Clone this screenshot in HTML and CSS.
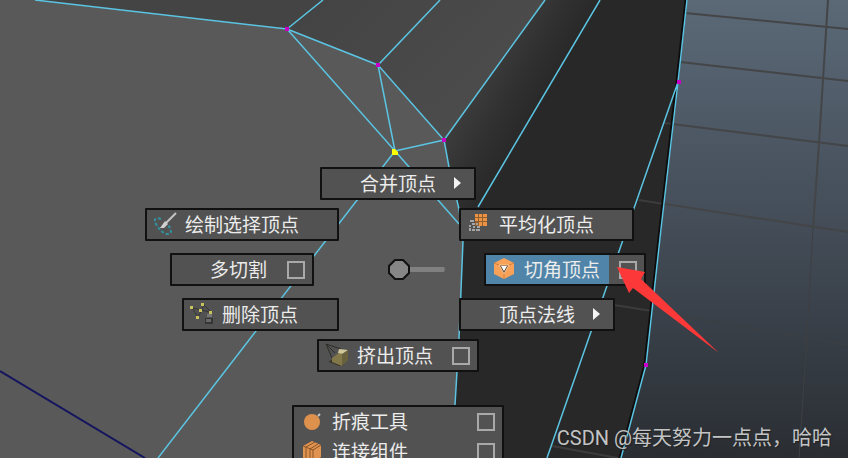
FILE: index.html
```html
<!DOCTYPE html>
<html lang="zh-CN">
<head>
<meta charset="utf-8">
<title>顶点标记菜单</title>
<link rel="stylesheet" href="styles.css">
</head>
<body>
<main class="viewport">
  <svg class="scene" aria-hidden="true">
    <defs>
      <linearGradient id="bevel" gradientUnits="userSpaceOnUse" x1="495" y1="60" x2="550" y2="92">
        <stop offset="0" stop-color="#3b3b3b"/>
        <stop offset=".5" stop-color="#303030"/>
        <stop offset="1" stop-color="#282828"/>
      </linearGradient>
      <linearGradient id="top" gradientUnits="userSpaceOnUse" x1="320" y1="0" x2="430" y2="120">
        <stop offset="0" stop-color="#444"/>
        <stop offset="1" stop-color="#4b4b4b"/>
      </linearGradient>
    </defs>
    <g class="grid">
      <path d="M685 13 848 29M680 62 848 81M664 123 848 146M639 200 848 232"/>
      <path d="M828 0 819 143 813 229"/>
      <path class="grid-far" d="M813 229 807 336 799 458M652 311 848 345"/>
    </g>
    <path fill="#282828" d="M440 0H687L678 82 661 229 646 365 630 425 621 458H440Z"/>
    <path fill="#595959" d="M0 0H440L444 140 449 167 459 209 463 241 461 290 459 338 455 405V458H0Z"/>
    <path fill="url(#top)" d="M35 0 287 29 378 65 444 140 545 0Z"/>
    <path fill="url(#bevel)" d="M545 0H640L478 280 463 241 459 209 449 167 444 140Z"/>
    <path class="grid-mesh" d="M639 200 664 204M664 123 674 124M614 305 652 311M552 446 618 458"/>
    <path class="rim" d="M686 0 677 82 660 229 645 365 629 425 620 458"/>
    <g class="edges">
      <path d="M35 0 287 29 323 0M287 29 378 65 440 0M287 29 395 151 378 65 444 140 395 151"/>
      <path d="M158 458 395 151 459 224M545 0 444 140 449 167 459 209 463 241 461 290 459 338 455 405"/>
      <path d="M600 0 478 207M678 82 547 458M687 0 678 82 661 229 646 365 630 425 621 458"/>
    </g>
    <path class="axis" d="M0 371 145 458"/>
    <g fill="#c800c8">
      <path d="M285 27h4v4h-4zM376 63h4v4h-4zM442 138h4v4h-4zM677 80h4v4h-4zM644 363h4v4h-4z"/>
    </g>
    <path fill="#ff0" d="M392 149h3l3 3v3h-6z"/>
    <path fill="#808080" d="M408 267h36l1 2-1 3h-36z"/>
    <path fill="#868686" stroke="#111" stroke-width="2" d="M395 260h8l6 6v7l-6 6h-8l-6-6v-7z"/>
  </svg>

  <nav class="marking-menu" aria-label="顶点">
    <div class="item merge">
      <button class="command" type="button"><span class="icon"></span>合并顶点<span class="arrow"></span></button>
    </div>
    <div class="item paint">
      <button class="command" type="button">
        <svg class="icon" viewBox="0 0 24 24" aria-hidden="true">
          <path fill="none" stroke="#3293a0" stroke-width="2" stroke-dasharray="3 2" d="M8 7C3 5 0 7 3 12c3 5 6 9 11 10 5 0 5-4 1-9"/>
          <path stroke="#c4c4c4" stroke-width="2" d="m13 11 10-10"/>
          <path fill="#d0d0d0" d="m12 9 3 3-4 4H7z"/>
        </svg>绘制选择顶点</button>
    </div>
    <div class="item multicut">
      <button class="command" type="button"><span class="icon"></span>多切割</button>
      <button class="option" type="button" aria-label="多切割选项"><span class="box"></span></button>
    </div>
    <div class="item delete">
      <button class="command" type="button">
        <svg class="icon" viewBox="0 0 24 24" aria-hidden="true">
          <path fill="none" stroke="#343434" d="m2 6 6 9 4-7 7 2M2 6l10 2 2-6M13 2l7 7"/>
          <path fill="#c8c35c" d="M0 4h3v3H0zM11 1h3v3h-3zM9 7h3v3H9zM6 14h3v3H6zM19 9h3v3h-3z"/>
          <path fill="#777" d="M17 12h5v3h-5z"/>
          <path fill="#363636" d="M15 16h8v6h-8z"/>
          <path fill="#686868" d="M16 17h5v3h-5z"/>
        </svg>删除顶点</button>
    </div>
    <div class="item average">
      <button class="command" type="button">
        <svg class="icon" viewBox="0 0 24 24" aria-hidden="true">
          <path fill="#92602f" d="M8 2h12v12H8z"/>
          <path fill="#eb9244" d="M8 2h3v3H8zM12 2h3v3h-3zM16 2h4v3h-4zM8 6h3v3H8zM12 6h3v3h-3zM16 6h4v3h-4zM12 10h3v4h-3zM16 10h4v4h-4z"/>
          <path fill="#a5a5a5" d="M3 8h4v2H3zM5 11h3v2H5zM2 13h2v2H2zM9 11h2v2H9zM6 14h2v2H6zM10 14h3v2h-3zM2 16h2v3H2zM5 17h3v2H5zM9 17h4v2H9z"/>
        </svg>平均化顶点</button>
    </div>
    <div class="item chamfer">
      <button class="command selected" type="button">
        <svg class="icon" viewBox="0 0 24 24" aria-hidden="true">
          <path fill="#f8a259" d="m12 1 10 5v11l-10 5-10-5V6z"/>
          <path fill="none" stroke="#d47d35" d="M2 6l5 2M22 6l-5 2M12 17v5"/>
          <path fill="#5c5148" stroke="#ffc38c" d="M7 8h10l-5 9z"/>
          <path fill="#fff" d="M9 9h6l-3 5z"/>
        </svg>切角顶点</button>
      <button class="option" type="button" aria-label="切角顶点选项"><span class="box"></span></button>
    </div>
    <div class="item normals">
      <button class="command" type="button"><span class="icon"></span>顶点法线<span class="arrow"></span></button>
    </div>
    <div class="item extrude">
      <button class="command" type="button">
        <svg class="icon" viewBox="0 0 24 24" aria-hidden="true">
          <path fill="none" stroke="#2d2e28" d="m1 1 6 14M1 1l15 5M1 1l9 9M4 19l7-4"/>
          <path fill="#3c3828" d="m4 19 6-5 9 8-5 1z"/>
          <path fill="#817748" d="m7 15 8-6 2 2v12l-10-4z"/>
          <path fill="#cfc79b" d="m14 6 9 1-5 4-5-1z"/>
          <path fill="#69613b" d="m17 11 6-4v10l-6 6z"/>
        </svg>挤出顶点</button>
      <button class="option" type="button" aria-label="挤出顶点选项"><span class="box"></span></button>
    </div>
    <div class="list">
      <div class="row">
        <button class="command" type="button">
          <svg class="icon" viewBox="0 0 24 24" aria-hidden="true">
            <circle cx="12" cy="13" r="8" fill="#de914d"/>
            <path stroke="#c7c7c7" stroke-width="2" d="m18 7 2-2"/>
          </svg>折痕工具</button>
        <button class="option" type="button" aria-label="折痕工具选项"><span class="box"></span></button>
      </div>
      <div class="row">
        <button class="command" type="button">
          <svg class="icon" viewBox="0 0 24 24" aria-hidden="true">
            <path fill="#e09350" d="m3 7 9-5 9 4v12l-8 5-10-4z"/>
            <path fill="none" stroke="#8a5526" d="m3 7 10 4v12M13 11l8-5M6 8l9-5M10 10l8-5M6 8v12M10 10v12"/>
          </svg>连接组件</button>
        <button class="option" type="button" aria-label="连接组件选项"><span class="box"></span></button>
      </div>
    </div>
  </nav>

  <svg class="pointer" viewBox="0 0 102 86" aria-hidden="true">
    <path fill="#fd3838" d="M0 0 28 5 24 12 102 86 16 21 12 26Z"/>
  </svg>
  <p class="watermark">CSDN @每天努力一点点，哈哈</p>
</main>
</body>
</html>
```
FILE: styles.css
```css
* {
  box-sizing: border-box;
}

body {
  margin: 0;
  font-family: "Noto Sans CJK SC", sans-serif;
}

.viewport {
  position: relative;
  height: 100vh;
  overflow: hidden;
  background: linear-gradient(#5b6977, #434c57 50%, #2a2e33);
}

.scene {
  display: block;
  width: 100%;
  height: 100%;
}

.grid,
.grid-mesh,
.rim,
.edges,
.axis {
  fill: none;
}

.grid {
  stroke: #444547;
  stroke-width: 2;
}

.grid-far {
  stroke: #3e4043;
  stroke-width: 1;
}

.grid-mesh {
  stroke: #3c3c3c;
  stroke-width: 2;
}

.rim {
  stroke: #0c0c0c;
  stroke-width: 3;
}

.edges {
  stroke: #5bc4e2;
  stroke-width: 1.5;
}

.axis {
  stroke: #15155f;
  stroke-width: 2;
}

/* Marking menu: each item sits at its own bearing around the cursor */
.item,
.list {
  position: absolute;
  border: 2px solid #111;
  border-radius: 1px;
  background: #525252;
}

.item {
  display: flex;
  height: 33px;
}

.merge {
  left: 320px;
  top: 167px;
  width: 156px;
}

.paint {
  left: 145px;
  top: 208px;
  width: 194px;
}

.multicut {
  left: 170px;
  top: 253px;
  width: 144px;
}

.delete {
  left: 182px;
  top: 298px;
  width: 157px;
}

.average {
  left: 459px;
  top: 208px;
  width: 175px;
}

.chamfer {
  left: 484px;
  top: 253px;
  width: 162px;
}

.normals {
  left: 459px;
  top: 298px;
  width: 156px;
}

.extrude {
  left: 317px;
  top: 339px;
  width: 162px;
}

.list {
  left: 292px;
  top: 405px;
  width: 212px;
}

.row {
  display: flex;
  height: 30px;
}

.command,
.option {
  display: flex;
  align-items: center;
  border: 0;
  background: transparent;
  color: #ececec;
}

.command {
  flex: 1;
  padding: 0 0 2px 6px;
  font: 19px/28px "Noto Sans CJK SC", sans-serif;
  white-space: nowrap;
}

.selected {
  background: #5085a9;
}

.option {
  width: 35px;
  padding: 0 0 0 10px;
}

.box {
  width: 18px;
  height: 18px;
  border: 2px solid #a9a9a9;
}

.icon {
  flex: none;
  width: 24px;
  height: 24px;
  margin-right: 8px;
}

.arrow {
  margin-left: auto;
  margin-right: 13px;
  border: solid transparent;
  border-width: 6px 0 6px 7px;
  border-left-color: #f4f4f4;
}

.pointer {
  position: absolute;
  left: 617px;
  top: 267px;
  width: 102px;
  height: 86px;
}

.watermark {
  position: absolute;
  right: 16px;
  bottom: 6px;
  margin: 0;
  color: #c3c4c5;
  font: 20px/28px Roboto, "Noto Sans CJK SC", sans-serif;
  text-shadow: 1px 1px 1px #222;
}
```
